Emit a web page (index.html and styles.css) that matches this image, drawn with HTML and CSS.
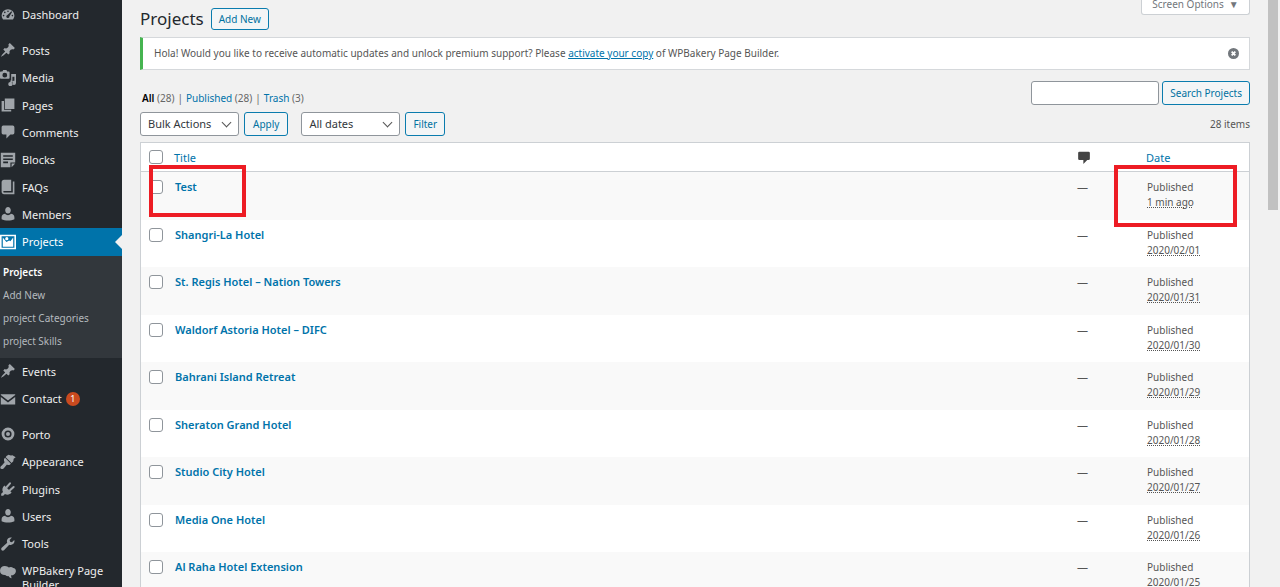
FILE: index.html
```html
<!DOCTYPE html>
<html lang="en">
<head>
<meta charset="utf-8">
<title>Projects</title>
<link rel="stylesheet" href="styles.css">
</head>
<body>
<div class="admin">
<nav class="sidebar" aria-label="Main menu">
<ul class="menu">
<li><a href="#"><svg viewBox="0 0 20 20"><path fill-rule="evenodd" d="M3.800 17h12.400c1.200-1.500 1.800-3.200 1.800-5a8 8 0 1 0-16 0c0 1.800.6 3.500 1.800 5zM10 5.500a1 1 0 1 1 0 2 1 1 0 0 1 0-2zM6 7a1 1 0 1 1 0 2 1 1 0 0 1 0-2zm8.300-.3.800.8-3.300 5.300a2 2 0 1 1-2.500-1.600zM4.500 11a1 1 0 1 1 0 2 1 1 0 0 1 0-2zm11 0a1 1 0 1 1 0 2 1 1 0 0 1 0-2z"/></svg>Dashboard</a></li>
</ul>
<ul class="menu">
<li><a href="#"><svg viewBox="0 0 20 20"><path d="M10.440 3.020l1.820-1.820 6.360 6.350-1.830 1.820c-1.050-.680-2.480-.570-3.410.360l-.750.750c-.920.930-1.040 2.350-.350 3.410l-1.830 1.820-2.410-2.410-2.800 2.790c-.420.420-3.380 2.710-3.800 2.290s1.860-3.390 2.280-3.810l2.790-2.790L4.100 9.360l1.830-1.820c1.050.690 2.480.570 3.400-.360l.750-.750c.930-.920 1.050-2.350.360-3.410z"/></svg>Posts</a></li>
<li><a href="#"><svg viewBox="0 0 20 20"><path fill-rule="evenodd" d="M1 2h2l1-2h4l1 2h2q1 0 1 1v7q0 1-1 1H1q-1 0-1-1V3q0-1 1-1zm5 1.500a3 3 0 1 0 0 6 3 3 0 0 0 0-6zM14 5h6v11a2.600 2.600 0 1 1-2-2.500V8.500h-2.500v9A2.600 2.600 0 1 1 13 15v-2h1z"/></svg>Media</a></li>
<li><a href="#"><svg viewBox="0 0 20 20"><path d="M6 15V2h12v13zM5 16h9v2H2V5h3z"/></svg>Pages</a></li>
<li><a href="#"><svg viewBox="0 0 20 20"><path d="M4 2h12q2 0 2 2v7q0 2-2 2h-3l-5 5v-5H4q-2 0-2-2V4q0-2 2-2z"/></svg>Comments</a></li>
<li><a href="#"><svg viewBox="0 0 20 20"><path fill-rule="evenodd" d="M1 1h18v12h-6v6H1zM4 4v2h12V4zm0 4v2h12V8zm0 4v2h6v-2zM14.500 14.500H19L14.500 19z"/></svg>Blocks</a></li>
<li><a href="#"><svg viewBox="0 0 20 20"><path d="M16 3h2v16H5c-1.700 0-3-1.300-3-3V4c0-1.700 1.300-3 3-3h9v14H5c-.6 0-1 .4-1 1s.4 1 1 1h11z"/></svg>FAQs</a></li>
<li><a href="#"><svg viewBox="0 0 20 20"><path d="M10 9.500c-2 0-3.500-1.700-3.500-4.200S8 1.200 10 1.200s3.500 1.600 3.500 4.100S12 9.500 10 9.500zM2 16.500V14c0-2.500 2-4.300 4.500-4.300 1 1.200 2.200 1.800 3.500 1.800s2.500-.6 3.500-1.800C16 9.700 18 11.500 18 14v2.500c-2 1-5 1.600-8 1.600s-6-.6-8-1.600z"/></svg>Members</a></li>
<li class="current"><a href="#"><svg viewBox="0 0 20 20"><path fill-rule="evenodd" d="M0 1h20v18H0zM2 2.800v14.400h16V2.800zM3.500 4.500 8 10l3.500-2 1.500 1 3.500-4.500v11.300h-13z"/><circle cx="8.500" cy="5.800" r="2"/></svg>Projects</a></li>
</ul>
<ul class="submenu">
<li><a class="on" href="#">Projects</a></li>
<li><a href="#">Add New</a></li>
<li><a href="#">project Categories</a></li>
<li><a href="#">project Skills</a></li>
</ul>
<ul class="menu lower">
<li><a href="#"><svg viewBox="0 0 20 20"><path d="M10.440 3.020l1.820-1.820 6.360 6.350-1.830 1.820c-1.050-.680-2.480-.570-3.410.360l-.750.750c-.920.930-1.040 2.350-.350 3.410l-1.830 1.820-2.410-2.410-2.800 2.790c-.420.420-3.380 2.710-3.800 2.290s1.860-3.390 2.280-3.810l2.790-2.790L4.100 9.360l1.830-1.820c1.050.690 2.480.570 3.400-.360l.750-.750c.930-.920 1.050-2.350.360-3.410z"/></svg>Events</a></li>
<li><a href="#"><svg viewBox="0 0 20 20"><path d="M1 4h18v1l-9 7-9-7zm0 3.500 9 7 9-7V17H1z"/></svg>Contact<span class="badge">1</span></a></li>
</ul>
<ul class="menu">
<li><a href="#"><svg viewBox="0 0 20 20"><path fill-rule="evenodd" d="M10 2a8 8 0 1 1 0 16 8 8 0 0 1 0-16zm0 3.500a4.500 4.500 0 1 0 0 9 4.500 4.500 0 0 0 0-9zm0 2a2.500 2.500 0 1 1 0 5 2.500 2.500 0 0 1 0-5z"/></svg>Porto</a></li>
<li><a href="#"><svg viewBox="0 0 20 20"><path d="M14.500 11.400 7.100 4l1-1.500 2.500-1.500 3 1 2-.5 4 2.500-2.500 2-.5 3zM6.300 4.800l7.400 7.400-1.500 1.300c-1.500.5-2.500 0-3.500-.5L4.500 18c-1.500 1-3.500 1-4-.2-.5-1.200.5-3 1.800-3.500l3.500-4C5 9 4.700 7.500 5 6.200z"/></svg>Appearance</a></li>
<li><a href="#"><svg viewBox="0 0 20 20"><path d="M5.500 5.500l9 9c-2.200 2.700-5.500 3.200-8.300 1.700L4 18.500H1.500V16l2.300-2.200C2.300 11 2.800 7.700 5.500 5.500z"/><path d="M8.500 7.500l4-4.500M12.500 11.500l4.500-4" fill="none" stroke="#a0a5aa" stroke-width="2.600" stroke-linecap="round"/></svg>Plugins</a></li>
<li><a href="#"><svg viewBox="0 0 20 20"><path d="M10 9.500c-2 0-3.500-1.700-3.500-4.200S8 1.200 10 1.200s3.500 1.600 3.500 4.100S12 9.500 10 9.500zM2 16.500V14c0-2.500 2-4.300 4.500-4.300 1 1.200 2.200 1.800 3.500 1.800s2.500-.6 3.500-1.800C16 9.700 18 11.500 18 14v2.500c-2 1-5 1.600-8 1.600s-6-.6-8-1.600z"/></svg>Users</a></li>
<li><a href="#"><svg viewBox="0 0 20 20"><path d="M16.700 9.800c-1.400 1.400-3.500 1.700-5.200 1L5 17.700c-.8.800-2.100.8-2.900 0s-.8-2.100 0-2.900l6.900-6.500c-.7-1.700-.4-3.800 1-5.200 1.300-1.300 3.200-1.700 4.900-1.100L12 4.900l.7 2.200 2.200.7 2.900-2.900c.6 1.700.2 3.600-1.100 4.900z"/></svg>Tools</a></li>
<li class="tall"><a href="#"><svg viewBox="0 0 20 20"><path d="M6 2.500c2.500 0 4 1 5 2 1.500-1 4-1 5.500.5 3 .3 4 3 3 5.500s-3 3.700-5.500 3.500c-.3 1.500.2 2.500.7 3.700-2-.2-3.300-1.200-4.200-2.700-1.500.5-3 0-4-1.200C3 14 0 12 0 8.300S2.500 2.500 6 2.500z"/></svg><span>WPBakery Page Builder</span></a></li>
</ul>
</nav>
<main class="content">
<button class="screen-options" type="button">Screen Options <span class="caret">▼</span></button>
<header class="heading"><h1>Projects</h1><a class="btn add" href="#">Add New</a></header>
<div class="notice">
<p>Hola! Would you like to receive automatic updates and unlock premium support? Please <a href="#">activate your copy</a> of WPBakery Page Builder.</p>
<button class="dismiss" type="button" aria-label="Dismiss"><svg viewBox="0 0 12 12"><circle cx="6" cy="6" r="6"/><path d="m4 4 4 4m0-4-4 4"/></svg></button>
</div>
<div class="toolbar">
<ul class="views">
<li><a class="all" href="#">All</a> (28)</li><li class="bar">|</li><li><a href="#">Published</a> (28)</li><li class="bar">|</li><li><a href="#">Trash</a> (3)</li>
</ul>
<form class="search"><input type="search" aria-label="Search Projects"><button class="btn" type="button">Search Projects</button></form>
</div>
<div class="tablenav">
<span class="dropdown"><select aria-label="Bulk actions"><option>Bulk Actions</option></select></span>
<button class="btn apply" type="button">Apply</button>
<span class="dropdown"><select aria-label="Filter by date"><option>All dates</option></select></span>
<button class="btn" type="button">Filter</button>
<span class="count">28 items</span>
</div>
<table class="list">
<colgroup><col class="c-check"><col><col class="c-comments"><col class="c-date"></colgroup>
<thead><tr><th><input type="checkbox" aria-label="Select all"></th><th><a href="#">Title</a></th><th class="num"><svg viewBox="0 0 20 20" role="img" aria-label="Comments"><path d="M3 1h14q2 0 2 2v9q0 2-2 2h-2l-6 6v-6H3q-2 0-2-2V3q0-2 2-2z"/></svg></th><th class="date"><a href="#">Date</a></th></tr></thead>
<tbody>
<tr><td class="marked"><input type="checkbox" aria-label="Select Test"><span class="mark mark-title"></span></td><td><a href="#">Test</a></td><td class="num">—</td><td class="date marked">Published<br><abbr>1 min ago</abbr><span class="mark mark-date"></span></td></tr>
<tr><td><input type="checkbox" aria-label="Select Shangri-La Hotel"></td><td><a href="#">Shangri-La Hotel</a></td><td class="num">—</td><td class="date">Published<br><abbr>2020/02/01</abbr></td></tr>
<tr><td><input type="checkbox" aria-label="Select St. Regis Hotel"></td><td><a href="#">St. Regis Hotel – Nation Towers</a></td><td class="num">—</td><td class="date">Published<br><abbr>2020/01/31</abbr></td></tr>
<tr><td><input type="checkbox" aria-label="Select Waldorf Astoria Hotel"></td><td><a href="#">Waldorf Astoria Hotel – DIFC</a></td><td class="num">—</td><td class="date">Published<br><abbr>2020/01/30</abbr></td></tr>
<tr><td><input type="checkbox" aria-label="Select Bahrani Island Retreat"></td><td><a href="#">Bahrani Island Retreat</a></td><td class="num">—</td><td class="date">Published<br><abbr>2020/01/29</abbr></td></tr>
<tr><td><input type="checkbox" aria-label="Select Sheraton Grand Hotel"></td><td><a href="#">Sheraton Grand Hotel</a></td><td class="num">—</td><td class="date">Published<br><abbr>2020/01/28</abbr></td></tr>
<tr><td><input type="checkbox" aria-label="Select Studio City Hotel"></td><td><a href="#">Studio City Hotel</a></td><td class="num">—</td><td class="date">Published<br><abbr>2020/01/27</abbr></td></tr>
<tr><td><input type="checkbox" aria-label="Select Media One Hotel"></td><td><a href="#">Media One Hotel</a></td><td class="num">—</td><td class="date">Published<br><abbr>2020/01/26</abbr></td></tr>
<tr><td><input type="checkbox" aria-label="Select Al Raha Hotel Extension"></td><td><a href="#">Al Raha Hotel Extension</a></td><td class="num">—</td><td class="date">Published<br><abbr>2020/01/25</abbr></td></tr>
</tbody>
</table>
</main>
<div class="scrollbar"><div class="thumb"></div></div>
</div>
</body>
</html>
```
FILE: styles.css
```css
* { box-sizing: border-box; }
body { margin: 0; background: #f1f1f1; color: #555; font: 10px/15px "Noto Sans", "Open Sans", sans-serif; }
ul { margin: 0; padding: 0; list-style: none; }
a { color: #0073aa; text-decoration: none; }
button, input, select { font: inherit; margin: 0; }
.admin { display: flex; height: 100vh; overflow: hidden; }

.sidebar { flex: 0 0 122px; background: #23282d; padding-top: 1px; }
.menu { font-size: 11px; }
.menu + .menu { margin-top: 9px; }
.lower + .menu { margin-top: 8px; }
.menu a { display: flex; align-items: center; gap: 6px; height: 27px; padding-bottom: 1px; color: #eee; }
.menu li:nth-child(3n+2) a { height: 28px; }
.menu svg { flex: none; width: 16px; height: 16px; fill: #a0a5aa; }
.menu .current a { background: #0073aa; color: #fff; position: relative; }
.menu .current svg { fill: #fff; }
.menu .current a::after { content: ""; position: absolute; right: 0; top: 7px; border: 7px solid transparent; border-left-width: 0; border-right-color: #f1f1f1; }
.menu .tall a { height: auto; align-items: flex-start; padding-top: 6px; line-height: 14px; }
.badge { width: 14px; height: 14px; margin-left: -2px; border-radius: 50%; background: #ca4a1f; color: #fff; font-size: 9px; line-height: 14px; text-align: center; }
.submenu { padding: 5px 3px; background: #32373c; }
.submenu a { display: block; line-height: 23px; color: #b4b9be; white-space: nowrap; }
.submenu .on { color: #fff; font-weight: 600; }

.content { flex: 1; min-width: 0; padding: 8px 18px 0; position: relative; }
.screen-options { position: absolute; top: 0; right: 18px; width: 109px; height: 15px; padding: 0; border: 1px solid #ccd0d4; border-top: 0; border-radius: 0 0 3px 3px; background: #fff; color: #72777c; line-height: 8px; display: flex; justify-content: center; gap: 5px; }
.heading { display: flex; align-items: center; gap: 7px; height: 22px; }
h1 { margin: 0; font-size: 17px; line-height: 22px; font-weight: 400; color: #23282d; }
.btn { height: 24px; padding: 0 7px; border: 1px solid #0a7cae; border-radius: 3px; background: #f3f5f6; color: #0071a1; line-height: 22px; white-space: nowrap; }
.add { height: 22px; line-height: 20px; }
.notice { display: flex; align-items: center; justify-content: space-between; height: 33px; margin-top: 7px; padding: 0 10px 0 11px; border: 1px solid #d5d8db; border-left: 3px solid #46b450; background: #fff; }
.notice p { margin: 0; }
.notice a { text-decoration: underline; }
.dismiss { display: flex; padding: 0; border: 0; background: none; }
.dismiss svg { width: 11px; height: 11px; fill: #72777c; stroke: #fff; stroke-width: 2; }
.dismiss circle { stroke: none; }
.toolbar { display: flex; justify-content: space-between; align-items: flex-end; margin-top: 11px; }
.views { display: flex; gap: 3px; padding-left: 2px; line-height: 14px; color: #666; }
.views .all { color: #000; font-weight: 600; }
.search { display: flex; gap: 3px; }
.search input { width: 128px; height: 24px; padding: 0 6px; border: 1px solid #8f959b; border-radius: 3px; background: #fff; appearance: none; }
.tablenav { display: flex; align-items: center; gap: 5px; height: 24px; margin-top: 7px; }
.dropdown { position: relative; display: flex; }
.dropdown::after { content: ""; position: absolute; right: 9px; top: 7px; width: 6px; height: 6px; border: solid #555; border-width: 0 1px 1px 0; transform: rotate(45deg); pointer-events: none; }
select { width: 99px; height: 24px; padding: 0 7px; border: 1px solid #8f959b; border-radius: 3px; appearance: none; color: #32373c; background: #fff; font-size: 11px; line-height: 20px; }
.apply { padding: 0 8px; margin-right: 8px; }
.count { margin-left: auto; }

.list { width: 100%; margin-top: 6px; table-layout: fixed; border-collapse: separate; border-spacing: 0; border: 1px solid #ccd0d4; background: #fff; }
.c-check { width: 32px; }
.c-comments { width: 30px; }
.c-date { width: 142px; }
th, td { padding: 0; text-align: left; font-weight: 400; vertical-align: top; }
th { height: 29px; border-bottom: 1px solid #ccd0d4; vertical-align: middle; font-size: 11px; }
td { height: 47px; padding: 7px 2px 0; line-height: 15px; }
tbody tr:nth-child(odd) { background: #f9f9f9; }
tbody tr:nth-child(odd) td { height: 48px; }
td a { font-size: 11px; font-weight: 600; }
.list th:first-child, .list td:first-child { padding-left: 8px; }
th:nth-child(2) { padding-left: 1px; }
input[type="checkbox"] { display: block; appearance: none; width: 14px; height: 14px; border: 1px solid #8f959b; border-radius: 3px; background: #fff; }
td input[type="checkbox"] { margin-top: 1px; }
.list .num { padding-left: 0; font-size: 11px; }
.num svg { display: block; width: 14px; height: 13px; fill: #444; }
.list .date { padding-left: 39px; }
.list td.date { padding: 8px 0 0 40px; }
abbr { text-decoration: underline dotted; text-underline-offset: 1px; }
.marked { position: relative; }
.mark { position: absolute; border: 4px solid #ed1c24; }
.mark-title { left: 8px; top: -7px; width: 97px; height: 52px; }
.mark-date { right: 12px; top: -7px; width: 123px; height: 62px; }
.scrollbar { flex: 0 0 12px; }
.thumb { width: 10px; height: 210px; background: #c1c1c1; }
```
